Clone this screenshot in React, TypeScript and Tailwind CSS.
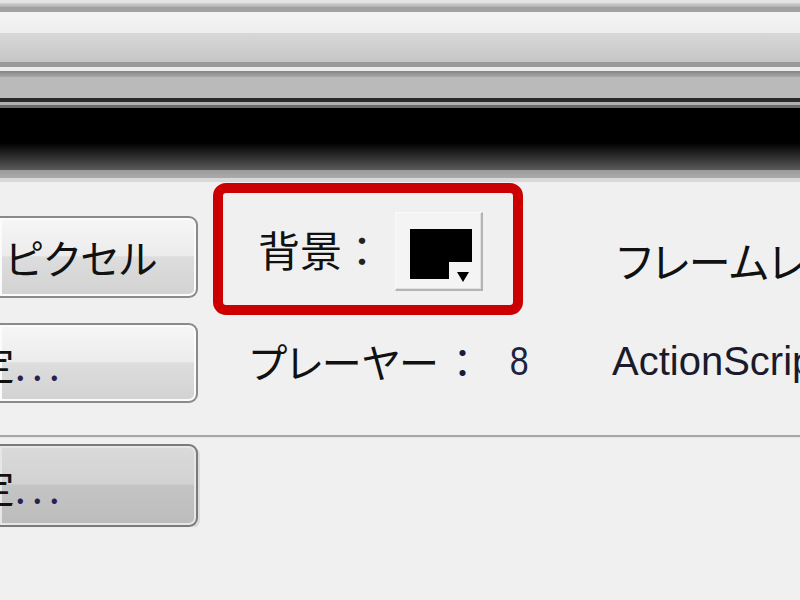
import React from "react";

const jp = "font-['Noto_Sans_CJK_JP',sans-serif] [font-feature-settings:'palt']";

const Swatch: React.FC = () => (
  <div className="w-[88px] h-[79px] bg-[#f4f4f4] border-r-2 border-b-2 border-[#b4b4b4] border-t border-l border-t-[#fafafa] border-l-[#fafafa] shadow-[inset_-1px_-1px_0_#e0e0e0]">
    <svg width="85" height="76" viewBox="0 0 85 76">
      <path d="M14 16 H76 V49 H53 V66 H14 Z" fill="#000" />
      <path d="M61 59 H73 L67 69 Z" fill="#000" />
    </svg>
  </div>
);

const App: React.FC = () => {
  return (
    <div className={`w-[800px] h-[600px] overflow-hidden bg-[#f0f0f0] text-[#111] ${jp}`}>
      {/* title / tool bars */}
      <div className="h-[3px] bg-[#e4e4e4]" />
      <div className="h-[4px] bg-[linear-gradient(to_bottom,#d4d4d4,#b0b0b0)]" />
      <div className="h-[5px] bg-[#a2a2a2]" />
      <div className="h-[21px] bg-[linear-gradient(to_bottom,#f4f4f4,#eeeeee)]" />
      <div className="h-[29px] bg-[linear-gradient(to_bottom,#d8d8d8,#c6c6c6)]" />
      <div className="h-[5px] bg-[#9a9a9a]" />
      <div className="h-[4px] bg-[#ececec]" />
      <div className="h-[6px] bg-[linear-gradient(to_bottom,#858585,#a8a8a8)]" />
      <div className="h-[21px] bg-[#bababa]" />
      <div className="h-[4px] bg-[#2a2a2a]" />
      <div className="h-[3px] bg-[#b0b0b0]" />
      <div className="h-[3px] bg-[#6a6a6a]" />
      <div className="h-[35px] bg-black" />
      <div className="h-[27px] bg-[linear-gradient(to_bottom,#000000,#5a5a5a)]" />
      <div className="h-[8px] bg-[linear-gradient(to_bottom,#9a9a9a,#aaaaaa)]" />
      <div className="h-[4px] bg-[#d8d8d8]" />

      {/* row 1 */}
      <div className="flex items-start h-[133px]">
        <div className="w-[198px] shrink-0 mt-[34px] overflow-hidden">
          <div className="h-[82px] flex items-center justify-end pr-[38px] whitespace-nowrap text-[40px] leading-none tracking-[1px] rounded-r-[9px] border-2 border-l-0 border-[#8a8a8a] bg-[linear-gradient(to_bottom,#f6f6f6,#ececec_48%,#dddddd_50%,#d2d2d2)] shadow-[inset_0_0_0_2px_#fbfbfb]">
            550 x 400 ピクセル
          </div>
        </div>
        <div className="ml-[15px] mt-[1px] w-[310px] h-[132px] shrink-0 rounded-[13px] border-[10px] border-[#cc0000] flex items-center">
          <span className="ml-[35px] text-[42px] leading-none">背景</span>
          <span className="ml-[8px] w-[24px] text-center text-[42px] leading-none text-[#222]">：</span>
          <div className="ml-[21px] mt-[4px]">
            <Swatch />
          </div>
        </div>
        <div className="ml-[94px] mt-[57px] whitespace-nowrap text-[42px] leading-none">
          フレームレート： 12 fps
        </div>
      </div>

      {/* row 2 */}
      <div className="flex items-start h-[120px]">
        <div className="w-[198px] shrink-0 mt-[8px] overflow-hidden">
          <div className="h-[80px] flex items-center justify-end pr-[130px] whitespace-nowrap text-[40px] leading-none rounded-r-[9px] border-2 border-l-0 border-[#8a8a8a] bg-[linear-gradient(to_bottom,#f6f6f6,#ececec_48%,#dddddd_50%,#d2d2d2)] shadow-[inset_0_0_0_2px_#fbfbfb]">
            設定<span className="tracking-[6px] text-[#2a2050]">...</span>
          </div>
        </div>
        <div className="ml-[52px] w-[362px] shrink-0 mt-[26px] flex items-center whitespace-nowrap text-[40px] leading-none">
          <span>プレーヤー</span>
          <span className="ml-[14px] w-[20px] text-center text-[#1a1a3a]">：</span>
          <span className="ml-[35px] font-['Liberation_Sans',sans-serif] text-[#1c2440] scale-x-[0.85]">8</span>
        </div>
        <div className="mt-[26px] whitespace-nowrap text-[40px] leading-none font-['Liberation_Sans',sans-serif] text-[#1a1a2a]">
          ActionScript： 2.0
        </div>
      </div>

      {/* separator */}
      <div className="h-[2px] bg-[#a6a6a6]" />
      <div className="h-[1px] bg-[#e6e6e6]" />

      {/* row 3 */}
      <div className="flex items-start">
        <div className="w-[200px] shrink-0 mt-[6px] overflow-hidden pr-[2px]">
          <div className="h-[83px] flex items-center justify-end pr-[130px] whitespace-nowrap text-[40px] leading-none rounded-r-[9px] border-2 border-l-0 border-[#7a7a7a] bg-[linear-gradient(to_bottom,#dadada,#d2d2d2_48%,#c4c4c4_50%,#bcbcbc)] shadow-[inset_0_0_0_2px_#e6e6e6,2px_2px_0_#dcdcdc]">
            設定<span className="tracking-[6px] text-[#2a2050]">...</span>
          </div>
        </div>
      </div>
    </div>
  );
};

export default App;
